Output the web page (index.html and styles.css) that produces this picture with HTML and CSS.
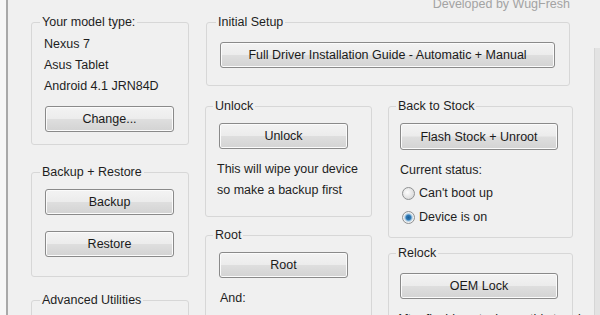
FILE: index.html
```html
<!DOCTYPE html>
<html>
<head>
<meta charset="utf-8">
<link rel="stylesheet" href="styles.css">
</head>
<body>
<div class="edge"></div>
<div class="window">
  <div class="credit">Developed by WugFresh</div>
  <div class="cols">
    <div class="col-left">
      <fieldset class="group g-model">
        <legend>Your model type:</legend>
        <div class="line">Nexus 7</div>
        <div class="line">Asus Tablet</div>
        <div class="line">Android 4.1 JRN84D</div>
        <button class="btn btn-left change">Change...</button>
      </fieldset>
      <fieldset class="group g-backup">
        <legend>Backup + Restore</legend>
        <button class="btn btn-left">Backup</button>
        <button class="btn btn-left restore">Restore</button>
      </fieldset>
      <fieldset class="group g-adv">
        <legend>Advanced Utilities</legend>
      </fieldset>
    </div>
    <div class="col-main">
      <fieldset class="group g-setup">
        <legend>Initial Setup</legend>
        <button class="btn btn-wide">Full Driver Installation Guide - Automatic + Manual</button>
      </fieldset>
      <div class="row">
        <div class="col-mid">
          <fieldset class="group g-root-wrap g-unlock">
            <legend>Unlock</legend>
            <button class="btn btn-mid">Unlock</button>
            <div class="note">This will wipe your device<br>so make a backup first</div>
          </fieldset>
          <fieldset class="group g-root">
            <legend>Root</legend>
            <button class="btn btn-mid">Root</button>
            <div class="note">And:</div>
            <div class="radio-row"><span class="radio"></span></div>
          </fieldset>
        </div>
        <div class="col-right">
          <fieldset class="group g-stock">
            <legend>Back to Stock</legend>
            <button class="btn btn-right">Flash Stock + Unroot</button>
            <div class="status">Current status:</div>
            <div class="radio-row"><span class="radio"></span>Can't boot up</div>
            <div class="radio-row"><span class="radio checked"></span>Device is on</div>
          </fieldset>
          <fieldset class="group g-relock">
            <legend>Relock</legend>
            <button class="btn btn-right">OEM Lock</button>
            <div class="note relock-note">After flashing stock, run this to relock</div>
          </fieldset>
        </div>
      </div>
    </div>
  </div>
</div>
<div class="rail"></div>
</body>
</html>
```
FILE: styles.css
```css
html, body {
  margin: 0;
  padding: 0;
}
body {
  width: 600px;
  height: 315px;
  overflow: hidden;
  display: flex;
  background: #f0f0f0;
  font-family: "Liberation Sans", Arial, sans-serif;
  font-size: 12.5px;
  color: #1e1e1e;
}
.edge {
  width: 6px;
  flex: none;
  background: #f7f7f7;
  border-right: 2px solid #a9a9a9;
}
.window {
  flex: 1;
  padding-left: 23px;
  min-width: 0;
}
.rail {
  width: 5px;
  flex: none;
  margin-top: 48px;
  background: #e3e3e3;
  border-left: 1px solid #d6d6d6;
}
.credit {
  margin-top: -2px;
  height: 17px;
  line-height: 12px;
  text-align: right;
  padding-right: 24px;
  color: #a3a3a3;
}
.cols {
  display: flex;
  gap: 16px;
}
.col-left {
  width: 158px;
  flex: none;
  display: flex;
  flex-direction: column;
}
.col-main {
  width: 368px;
  flex: none;
}
.group {
  margin: 0;
  border: 1px solid #d7d7d7;
  border-radius: 3px;
  min-width: 0;
  padding: 0 0 0 12px;
}
.group legend {
  padding: 0 2px;
  margin-left: -4px;
  line-height: 15px;
}
.line {
  line-height: 21px;
}
.btn {
  display: block;
  font-family: inherit;
  font-size: 12.5px;
  color: #1a1a1a;
  height: 26px;
  padding: 0;
  border: 1px solid #8a8a8a;
  border-radius: 3px;
  background: linear-gradient(#f3f3f3 0%, #ececec 48%, #dedede 52%, #d3d3d3 100%);
  box-shadow: inset 0 0 0 1px #fbfbfb;
}
.btn-left {
  width: 129px;
  margin-left: 1px;
}
.g-model {
  padding-top: 4px;
  padding-bottom: 12px;
}
.g-model .change {
  margin-top: 9px;
}
.g-backup {
  margin-top: 20px;
  padding-top: 9px;
  padding-bottom: 19px;
}
.g-backup .restore {
  margin-top: 16px;
}
.g-adv {
  margin-top: 16px;
  height: 60px;
}
.g-setup {
  margin: 0 3px 0 1px;
  padding: 12px 0 17px 13px;
}
.btn-wide {
  width: 335px;
}
.row {
  display: flex;
  gap: 16px;
  margin-top: 13px;
}
.col-mid {
  width: 167px;
  flex: none;
  display: flex;
  flex-direction: column;
}
.col-right {
  width: 185px;
  flex: none;
  display: flex;
  flex-direction: column;
}
.g-unlock {
  padding: 9px 0 15px 11px;
}
.btn-mid {
  width: 129px;
  margin-left: 2px;
}
.note {
  margin-top: 10px;
  line-height: 21px;
}
.g-root {
  margin-top: 11px;
  padding: 9px 0 10px 11px;
}
.g-root .note {
  padding-left: 3px;
}
.g-root .radio-row {
  padding-left: 5px;
}
.g-stock {
  padding: 9px 0 8px 11px;
}
.btn-right {
  width: 158px;
  height: 27px;
}
.status {
  margin-top: 10px;
  line-height: 21px;
}
.radio-row {
  display: flex;
  align-items: center;
  gap: 4px;
  height: 24px;
  padding-left: 2px;
}
.radio {
  width: 11px;
  height: 11px;
  border-radius: 50%;
  border: 1px solid #8f9192;
  background: radial-gradient(circle at 40% 40%, #fdfdfd 0%, #e4e4e4 55%, #cfcfcf 100%);
  flex: none;
}
.radio.checked {
  background: radial-gradient(circle, #1f5f96 0%, #2e79b5 30%, #9fc4e0 45%, #f2f2f2 62%, #e0e0e0 100%);
}
.g-relock {
  margin-top: 8px;
  padding: 12px 0 10px 11px;
}
.g-relock .btn-right {
  height: 26px;
}
.relock-note {
  white-space: nowrap;
  margin-left: -4px;
}
```
